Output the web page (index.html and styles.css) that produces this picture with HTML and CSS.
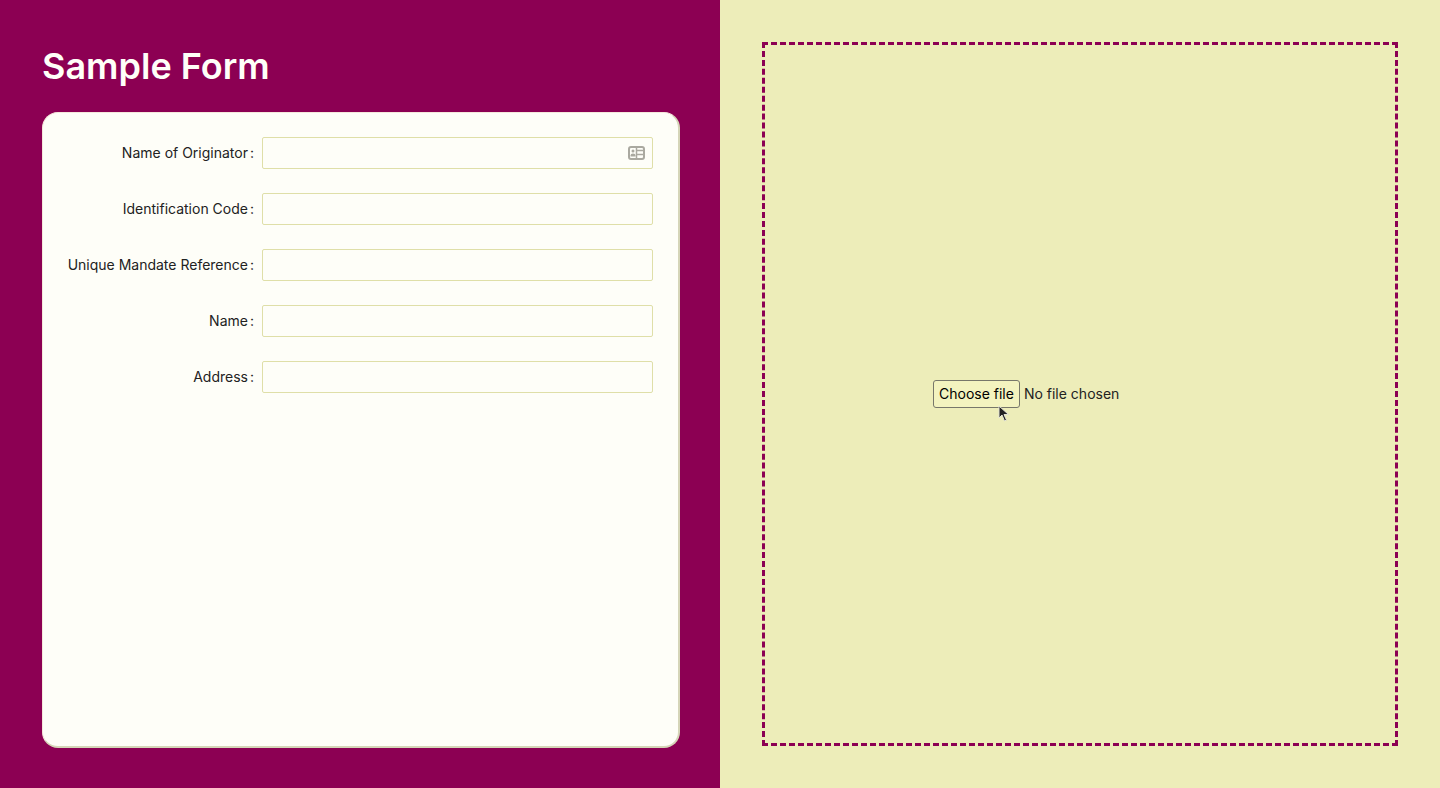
FILE: index.html
```html
<!DOCTYPE html>
<html lang="en">
<head>
<meta charset="utf-8">
<title>Sample Form</title>
<link rel="stylesheet" href="styles.css">
</head>
<body>
<main class="layout">
  <section class="form-pane">
    <h1 class="title">Sample Form</h1>
    <form class="card">
      <div class="row">
        <label class="label" for="originator">Name of Originator</label>
        <div class="control">
          <input class="field" id="originator" type="text">
          <svg class="contact-icon" viewBox="0 0 17 14" aria-hidden="true">
            <rect x="1" y="1" width="15" height="12" rx="2" fill="#fefef8" stroke="#aaa9a0" stroke-width="2"/>
            <path d="M8.5 1v12M9 4.500h6M9 8.500h6" fill="none" stroke="#aaa9a0" stroke-width="1.500"/>
            <circle cx="5" cy="5" r="1.500" fill="#aaa9a0"/>
            <path d="M2.500 10.500v-1q0-2 2.500-2t2.500 2v1z" fill="#aaa9a0"/>
          </svg>
        </div>
      </div>
      <div class="row">
        <label class="label" for="code">Identification Code</label>
        <div class="control"><input class="field" id="code" type="text"></div>
      </div>
      <div class="row">
        <label class="label" for="mandate">Unique Mandate Reference</label>
        <div class="control"><input class="field" id="mandate" type="text"></div>
      </div>
      <div class="row">
        <label class="label" for="name">Name</label>
        <div class="control"><input class="field" id="name" type="text"></div>
      </div>
      <div class="row">
        <label class="label" for="address">Address</label>
        <div class="control"><input class="field" id="address" type="text"></div>
      </div>
    </form>
  </section>
  <section class="upload-pane">
    <div class="dropzone">
      <div class="picker">
        <input class="file" id="file" type="file">
        <label class="file-button" for="file">Choose file</label>
        <span>No file chosen</span>
      </div>
    </div>
  </section>
</main>
<svg class="cursor" viewBox="0 0 12 18" aria-hidden="true">
  <path d="M1 1v12l3-3 2.500 6 2-1-2.500-5.500h4.500z" fill="#222" stroke="#e2e2d4" stroke-width="1"/>
</svg>
</body>
</html>
```
FILE: styles.css
```css
* {
  box-sizing: border-box;
}

body {
  margin: 0;
  font: 14px/22px Inter, "Liberation Sans", sans-serif;
  color: #222;
}

.layout {
  display: grid;
  grid-template-columns: 1fr 1fr;
  min-height: 100vh;
}

.form-pane {
  display: flex;
  flex-direction: column;
  padding: 42px 40px 40px 42px;
  background: #8c0053;
}

.title {
  margin: 0 0 22px;
  font-size: 36px;
  line-height: 48px;
  font-weight: 600;
  color: #fffff8;
}

.card {
  flex: 1;
  display: flex;
  flex-direction: column;
  gap: 24px;
  padding: 24px 25px 25px 24px;
  border: 1px solid;
  border-width: 1px 2px 2px 1px;
  border-color: #f5e8dc #d5d5b8 #d5d5b8 #f5e8dc;
  border-radius: 16px;
  background: #fefef8;
}

.row {
  display: grid;
  grid-template-columns: 195px 1fr;
  align-items: center;
}

.label {
  padding-right: 8px;
  text-align: right;
  white-space: nowrap;
}

.label::after {
  content: ":";
  margin-left: 2px;
}

.control {
  position: relative;
}

.field {
  display: block;
  width: 100%;
  height: 32px;
  padding: 4px 11px;
  border: 1px solid #dfdfa8;
  border-radius: 2px;
  background: transparent;
  font: inherit;
}

.contact-icon {
  position: absolute;
  top: 9px;
  right: 8px;
  width: 17px;
  height: 14px;
}

.upload-pane {
  display: flex;
  padding: 42px;
  background: #ededb9;
}

.dropzone {
  flex: 1;
  display: flex;
  align-items: center;
  justify-content: center;
  border: 3px dashed #8c0053;
}

.picker {
  position: relative;
  display: flex;
  align-items: center;
  gap: 4px;
  width: 294px;
}

.file {
  position: absolute;
  inset: 0;
  width: 100%;
  opacity: 0;
}

.file-button {
  padding: 2px 5px;
  border: 1px solid #77776a;
  border-radius: 3px;
  background: #f3f3bf;
  line-height: 22px;
  color: #000;
}

.cursor {
  position: absolute;
  top: 405px;
  left: 998px;
  width: 12px;
  height: 18px;
}
```
